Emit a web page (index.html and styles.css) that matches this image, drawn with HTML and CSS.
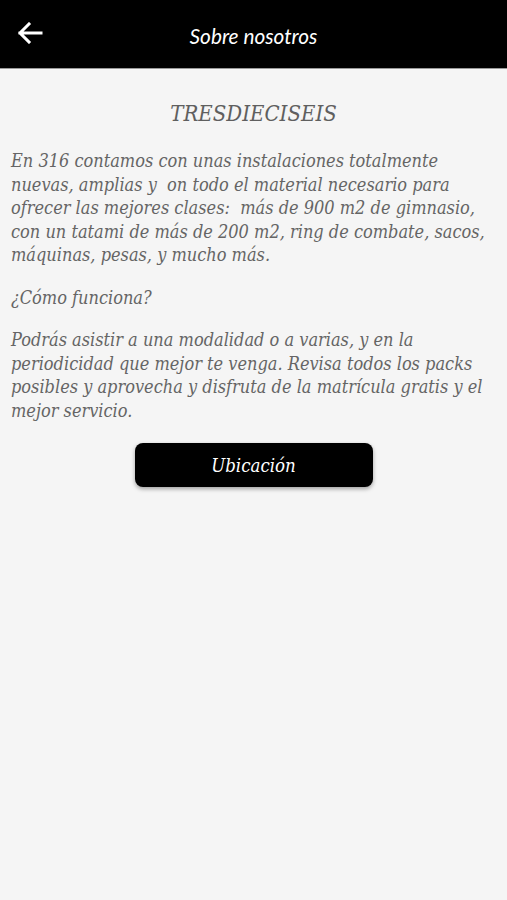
FILE: index.html
```html
<!DOCTYPE html>
<html lang="es">
<head>
<meta charset="utf-8">
<title>Sobre nosotros</title>
<link rel="stylesheet" href="styles.css">
</head>
<body>
<header class="topbar">
  <button class="back" aria-label="Volver">
    <svg width="26" height="22" viewBox="0 0 26 22"><path d="M24 11H3M12 2L3 11l9 9" fill="none" stroke="#fff" stroke-width="3" stroke-linecap="square"/></svg>
  </button>
  <h1 class="topbar-title">Sobre nosotros</h1>
</header>
<main class="content">
  <h2 class="title">TRESDIECISEIS</h2>
  <p class="para"><span class="ln">En 316 contamos con unas instalaciones totalmente</span><span class="ln">nuevas, amplias y&nbsp; on todo el material necesario para</span><span class="ln">ofrecer las mejores clases:&nbsp; más de 900 m2 de gimnasio,</span><span class="ln">con un tatami de más de 200 m2, ring de combate, sacos,</span><span class="ln">máquinas, pesas, y mucho más.</span></p>
  <p class="para"><span class="ln">¿Cómo funciona?</span></p>
  <p class="para"><span class="ln">Podrás asistir a una modalidad o a varias, y en la</span><span class="ln">periodicidad que mejor te venga. Revisa todos los packs</span><span class="ln">posibles y aprovecha y disfruta de la matrícula gratis y el</span><span class="ln">mejor servicio.</span></p>
  <div class="actions"><button class="btn">Ubicación</button></div>
</main>
</body>
</html>
```
FILE: styles.css
```css
html, body {
  margin: 0;
  padding: 0;
  background: #f5f5f5;
  height: 100%;
}
body {
  font-family: "DejaVu Serif", "Liberation Serif", serif;
}
.topbar {
  height: 68px;
  background: #000;
  border-bottom: 1px solid #9a9a9a;
  display: flex;
  align-items: center;
  position: relative;
}
.back {
  background: none;
  border: 0;
  padding: 0;
  margin-left: 17px;
  margin-top: -2px;
  width: 26px;
  height: 22px;
  display: flex;
}
.topbar-title {
  position: absolute;
  left: 0;
  right: 0;
  top: 24px;
  margin: 0;
  text-align: center;
  font-family: Lato, "Open Sans", sans-serif;
  font-style: italic;
  font-weight: 400;
  font-size: 20.8px;
  line-height: 24px;
  color: #fff;
  pointer-events: none;
}
.content {
  padding: 30px 11px 0;
  color: #656565;
}
.title {
  margin: 0 0 20px;
  text-align: center;
  font-family: "DejaVu Serif", serif;
  font-stretch: condensed;
  font-style: italic;
  font-weight: 400;
  font-size: 22px;
  line-height: 30px;
  color: #5f5f5f;
}
.para {
  margin: 0 0 19px;
  font-stretch: condensed;
  font-style: italic;
  font-size: 18px;
  line-height: 23.5px;
  color: #656565;
}
.ln {
  display: block;
  white-space: nowrap;
}
.actions {
  display: flex;
  justify-content: center;
  margin-top: 21px;
}
.btn {
  width: 238px;
  height: 44px;
  background: #000;
  color: #fff;
  border: 0;
  border-radius: 8px;
  box-shadow: 0 2px 4px rgba(0,0,0,0.35);
  font-family: "DejaVu Serif", serif;
  font-stretch: condensed;
  font-style: italic;
  font-size: 18.5px;
  padding: 0;
}
```
